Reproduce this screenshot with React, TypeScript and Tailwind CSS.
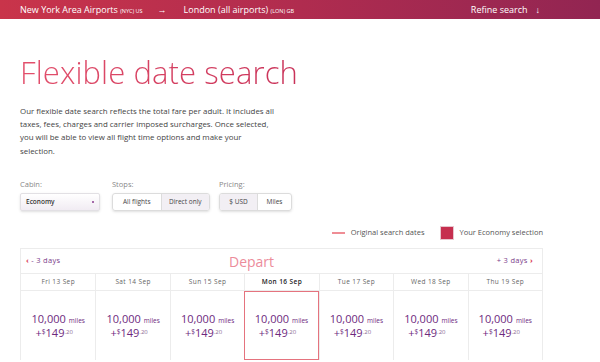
import React from 'react';

const days = [
  { label: 'Fri 13 Sep' },
  { label: 'Sat 14 Sep' },
  { label: 'Sun 15 Sep' },
  { label: 'Mon 16 Sep', selected: true },
  { label: 'Tue 17 Sep' },
  { label: 'Wed 18 Sep' },
  { label: 'Thu 19 Sep' },
];

const Fare = () => (
  <div className="flex flex-col items-center gap-[2px] text-[#6e2a7e]">
    <div className="flex items-baseline gap-[3px] leading-none">
      <span className="text-[11px] leading-none">10,000</span>
      <span className="text-[6.5px] leading-none">miles</span>
    </div>
    <div className="flex items-baseline -ml-[8px] leading-none">
      <span className="text-[11px] leading-none">+</span>
      <span className="text-[6.5px] leading-none relative -top-[3px]">$</span>
      <span className="text-[11px] leading-none">149</span>
      <span className="text-[6px] leading-none relative -top-[3px] text-[#8a6b93]">.20</span>
    </div>
  </div>
);

const App = () => {
  return (
    <div className="w-[600px] h-[362px] overflow-hidden bg-white font-['Open_Sans',sans-serif]">
      <div className="h-[19px] flex items-center px-[20px] text-white text-[9px] bg-gradient-to-r from-[#c9344a] via-[#b02c4f] to-[#922552]">
        <span>
          New York Area Airports <span className="text-[5.5px]">(NYC) US</span>
        </span>
        <span className="ml-[15px] text-[9px]">→</span>
        <span className="ml-[17px]">
          London (all airports) <span className="text-[5.5px]">(LON) GB</span>
        </span>
        <span className="ml-auto mr-[40px] flex items-center gap-[8px]">
          Refine search <span className="text-[9px]">↓</span>
        </span>
      </div>

      <div className="px-[20px]">
        <h1 className="mt-[38px] inline-block text-[31px] font-light leading-none tracking-[0.1px] text-transparent bg-clip-text bg-gradient-to-r from-[#e3506c] to-[#c93259]">
          Flexible date search
        </h1>

        <p className="mt-[15px] text-[7.9px] leading-[13.2px] text-[#444]">
          Our flexible date search reflects the total fare per adult. It includes all
          <br />
          taxes, fees, charges and carrier imposed surcharges. Once selected,
          <br />
          you will be able to view all flight time options and make your
          <br />
          selection.
        </p>

        <div className="mt-[21px] flex items-start text-[7.5px]">
          <div className="w-[92px]">
            <div className="text-[#888] mb-[3px]">Cabin:</div>
            <div className="h-[18px] w-[80px] flex items-center justify-between px-[5px] border border-[#e2e0e4] rounded-[2px] bg-gradient-to-b from-white to-[#f1ecf3] shadow-sm">
              <span className="font-semibold text-[#333] text-[6.5px]">Economy</span>
              <span className="w-[2px] h-[2px] rounded-full bg-[#8a3b8f]" />
            </div>
          </div>
          <div className="w-[107px]">
            <div className="text-[#888] mb-[3px]">Stops:</div>
            <div className="h-[18px] w-[98px] flex border border-[#dcdcdc] rounded-[3px] overflow-hidden shadow-sm text-[6.5px] text-[#444]">
              <div className="flex-1 flex items-center justify-center">All flights</div>
              <div className="flex-1 flex items-center justify-center bg-[#f2eff4] border-l border-[#dcdcdc]">
                Direct only
              </div>
            </div>
          </div>
          <div>
            <div className="text-[#888] mb-[3px]">Pricing:</div>
            <div className="h-[18px] w-[73px] flex border border-[#dcdcdc] rounded-[3px] overflow-hidden shadow-sm text-[6.5px] text-[#444]">
              <div className="w-[38px] flex items-center justify-center bg-[#f2eff4] border-r border-[#dcdcdc]">
                $ USD
              </div>
              <div className="flex-1 flex items-center justify-center">Miles</div>
            </div>
          </div>
        </div>

        <div className="w-[523px] mt-[15px] flex justify-end items-center text-[7.5px] text-[#555]">
          <span className="w-[13px] h-[2px] bg-[#ef8d95]" />
          <span className="ml-[6px]">Original search dates</span>
          <span className="ml-[16px] w-[14px] h-[14px] bg-[#c62f4f] border border-[#e7c6ce]" />
          <span className="ml-[5px]">Your Economy selection</span>
        </div>

        <div className="w-[523px] mt-[8px] border border-[#ececec] border-b-0">
          <div className="h-[25px] flex items-center justify-between px-[5px] border-b border-[#ececec] relative">
            <span className="text-[7.5px] text-[#7b3d8a] tracking-[0.3px]">
              <span className="text-[#d8344f] font-bold">‹</span> - 3 days
            </span>
            <span className="absolute left-[208px] top-[2px] text-[14px] text-[#ec8c9b]">Depart</span>
            <span className="text-[7.5px] text-[#7b3d8a] tracking-[0.3px] mr-[4px]">
              + 3 days <span className="text-[#d8344f] font-bold">›</span>
            </span>
          </div>
          <div className="grid grid-cols-7">
            {days.map((d, i) => (
              <div
                key={d.label}
                className={`h-[17px] flex items-center justify-center text-[6.5px] tracking-[0.4px] border-b border-[#ececec] ${
                  i > 0 ? 'border-l' : ''
                } ${d.selected ? 'text-[#222] font-semibold' : 'text-[#666]'}`}
              >
                {d.label}
              </div>
            ))}
            {days.map((d, i) => (
              <div
                key={d.label + 'f'}
                className={`h-[69px] flex items-center justify-center ${
                  d.selected
                    ? 'border-[1.5px] border-[#e5737e]'
                    : i > 0
                    ? 'border-l border-[#ececec]'
                    : ''
                }`}
              >
                <Fare />
              </div>
            ))}
          </div>
        </div>
      </div>
    </div>
  );
};

export default App;
